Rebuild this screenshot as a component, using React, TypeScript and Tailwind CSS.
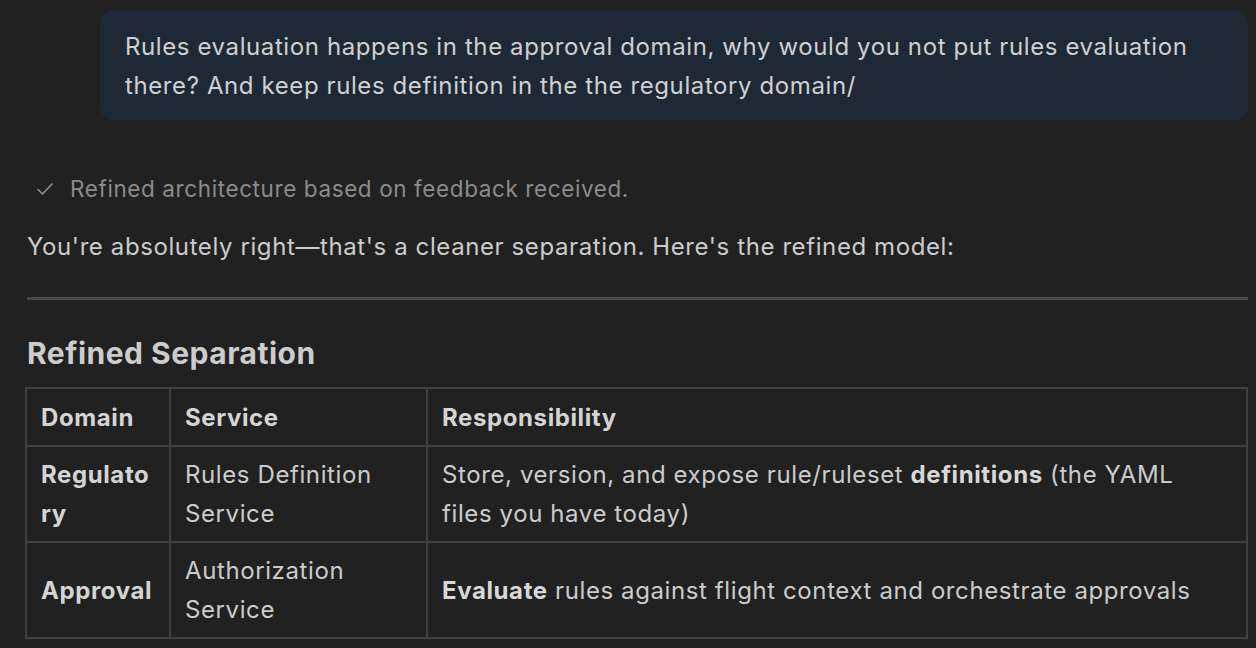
const font = { fontFamily: "Inter, 'Noto Sans', sans-serif" };

function CheckIcon() {
  return (
    <svg width="18" height="14" viewBox="0 0 18 14" fill="none" className="shrink-0">
      <polyline
        points="2,7.5 6.5,12 16,2"
        stroke="#8f8f8f"
        strokeWidth="1.6"
        strokeLinecap="round"
        strokeLinejoin="round"
      />
    </svg>
  );
}

const rows = [
  {
    domain: "Regulatory",
    service: "Rules Definition Service",
    resp: (
      <>
        Store, version, and expose rule/ruleset <b className="font-bold text-[#d8d8d8]">definitions</b> (the YAML
        files you have today)
      </>
    ),
  },
  {
    domain: "Approval",
    service: "Authorization Service",
    resp: (
      <>
        <b className="font-bold text-[#d8d8d8]">Evaluate</b> rules against flight context and orchestrate approvals
      </>
    ),
  },
];

export default function App() {
  return (
    <div
      className="w-full h-[648px] overflow-hidden bg-[#212121] text-[#cccccc] pl-[27px] pr-[8px] flex flex-col tracking-[0.6px]"
      style={font}
    >
      <div className="ml-[73px] mt-[10px] rounded-[14px] bg-[#1f2935] pl-[25px] pr-[30px] pt-[17px] pb-[15px] text-[24px] leading-[39px] text-[#cfd0d2]">
        Rules evaluation happens in the approval domain, why would you not put rules evaluation there? And keep
        rules definition in the the regulatory domain/
      </div>

      <div className="mt-[52px] h-[34px] flex items-center gap-[16px] pl-[9px] text-[22.5px] text-[#8c8c8c]">
        <CheckIcon />
        <span>Refined architecture based on feedback received.</span>
      </div>

      <p className="mt-[21px] text-[24px] leading-[39px] text-[#cccccc]">
        You're absolutely right—that's a cleaner separation. Here's the refined model:
      </p>

      <div className="mt-[31px] h-[3px] bg-[#484848]" />

      <h2 className="mt-[33px] text-[30px] leading-[40px] font-bold tracking-[0.5px] text-[#cccccc]">
        Refined Separation
      </h2>

      <table className="-ml-[2px] mt-[14px] w-[1223px] table-fixed border-collapse text-[24px] leading-[39px]">
        <colgroup>
          <col className="w-[144px]" />
          <col className="w-[257px]" />
          <col />
        </colgroup>
        <thead>
          <tr>
            {["Domain", "Service", "Responsibility"].map((h) => (
              <th
                key={h}
                className="border-2 border-[#414141] px-[14px] pt-[9px] pb-[8px] text-left font-bold text-[#d4d4d4]"
              >
                {h}
              </th>
            ))}
          </tr>
        </thead>
        <tbody>
          {rows.map((r) => (
            <tr key={r.domain}>
              <td className="border-2 border-[#414141] px-[14px] py-[8px] align-middle font-bold text-[#d4d4d4] break-all">
                {r.domain}
              </td>
              <td className="border-2 border-[#414141] px-[14px] py-[8px] align-middle">{r.service}</td>
              <td className="border-2 border-[#414141] pl-[14px] pr-[40px] py-[8px] align-middle">{r.resp}</td>
            </tr>
          ))}
        </tbody>
      </table>
    </div>
  );
}
